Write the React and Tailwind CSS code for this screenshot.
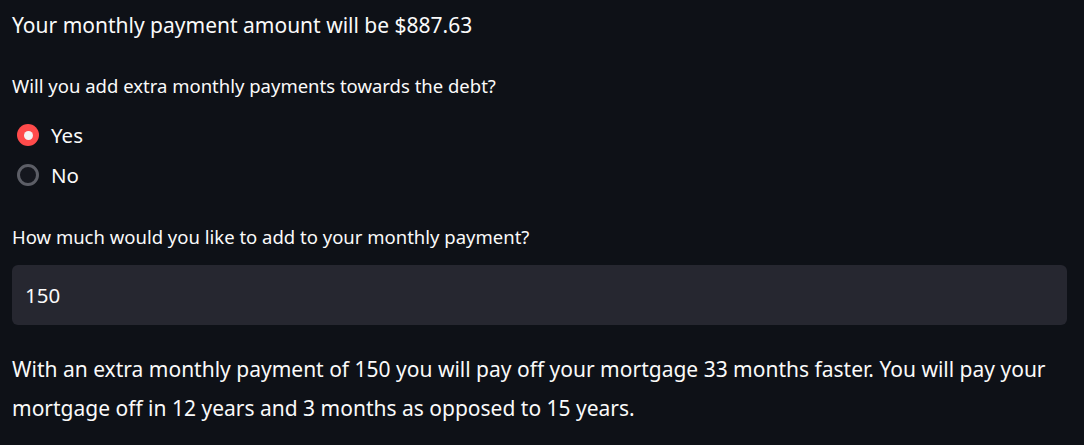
import { useState } from 'react';

function Radio({ label, checked, onClick }) {
  return (
    <label className="flex items-center h-10 cursor-pointer" onClick={onClick}>
      {checked ? (
        <span className="w-[22px] h-[22px] rounded-full bg-[#ff4b4b] flex items-center justify-center ml-[5px]">
          <span className="w-[9px] h-[9px] rounded-full bg-[#f4f4f4]" />
        </span>
      ) : (
        <span className="w-[22px] h-[22px] rounded-full border-[3px] border-[#5c5e66] bg-[#15171e] ml-[5px]" />
      )}
      <span className="ml-[12px] text-[20.5px] text-[#fafafa]">{label}</span>
    </label>
  );
}

export default function App() {
  const [extra, setExtra] = useState('yes');
  const [amount, setAmount] = useState('150');

  return (
    <div
      className="min-h-[445px] bg-[#0e1117] text-[#fafafa] pl-3 pr-[17px] pt-[9px]"
      style={{ fontFamily: '"Noto Sans", sans-serif' }}
    >
      {/* Monthly payment */}
      <p className="text-[21px] leading-[32px]">Your monthly payment amount will be $887.63</p>

      {/* Extra payments radio */}
      <p className="mt-[29px] text-[18.5px] leading-[32px]">Will you add extra monthly payments towards the debt?</p>
      <div className="mt-[13px] flex flex-col">
        <Radio label="Yes" checked={extra === 'yes'} onClick={() => setExtra('yes')} />
        <Radio label="No" checked={extra === 'no'} onClick={() => setExtra('no')} />
      </div>

      {/* Extra amount input */}
      <p className="mt-[26px] text-[18.5px] leading-[32px]">How much would you like to add to your monthly payment?</p>
      <input
        type="text"
        className="mt-[12px] block w-full h-[60px] rounded-[6px] bg-[#262730] px-[13px] text-[20.5px] text-[#fafafa] outline-none"
        value={amount}
        onChange={(e) => setAmount(e.target.value)}
      />

      {/* Result */}
      <p className="mt-[25px] text-[21px] leading-[39px]">
        With an extra monthly payment of 150 you will pay off your mortgage 33 months faster. You will pay your mortgage off in 12 years and 3 months as opposed to 15 years.
      </p>
    </div>
  );
}
